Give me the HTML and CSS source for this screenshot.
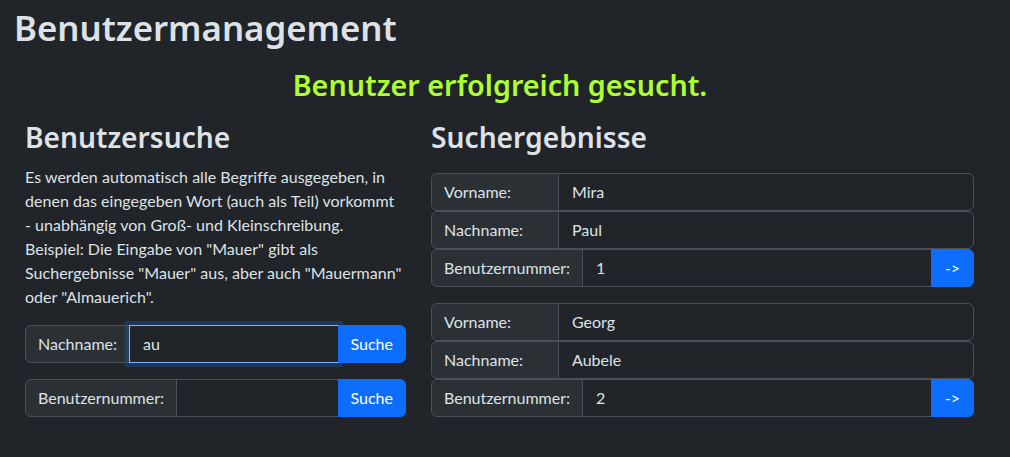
FILE: index.html
```html
<!DOCTYPE html>
<html lang="de">
<head>
<meta charset="utf-8">
<title>Benutzermanagement</title>
<link rel="stylesheet" href="styles.css">
</head>
<body>
<h1 class="title">Benutzermanagement</h1>
<h3 class="status">Benutzer erfolgreich gesucht.</h3>
<div class="layout">
  <section class="search">
    <h2 class="heading">Benutzersuche</h2>
    <p class="hint">Es werden automatisch alle Begriffe ausgegeben, in denen das eingegeben Wort (auch als Teil) vorkommt<br>- unabhängig von Groß- und Kleinschreibung. Beispiel: Die Eingabe von "Mauer" gibt als Suchergebnisse "Mauer" aus, aber auch "Mauermann" oder "Almauerich".</p>
    <div class="group spaced">
      <span class="label">Nachname:</span>
      <span class="field focused">au</span>
      <span class="btn">Suche</span>
    </div>
    <div class="group">
      <span class="label">Benutzernummer:</span>
      <span class="field"></span>
      <span class="btn">Suche</span>
    </div>
  </section>
  <section class="results">
    <h2 class="heading results-heading">Suchergebnisse</h2>
    <div class="record">
      <div class="group">
        <span class="label fixed">Vorname:</span>
        <span class="field last">Mira</span>
      </div>
      <div class="group">
        <span class="label fixed">Nachname:</span>
        <span class="field last">Paul</span>
      </div>
      <div class="group">
        <span class="label">Benutzernummer:</span>
        <span class="field">1</span>
        <span class="btn arrow">-&gt;</span>
      </div>
    </div>
    <div class="record">
      <div class="group">
        <span class="label fixed">Vorname:</span>
        <span class="field last">Georg</span>
      </div>
      <div class="group">
        <span class="label fixed">Nachname:</span>
        <span class="field last">Aubele</span>
      </div>
      <div class="group">
        <span class="label">Benutzernummer:</span>
        <span class="field">2</span>
        <span class="btn arrow">-&gt;</span>
      </div>
    </div>
  </section>
</div>
</body>
</html>
```
FILE: styles.css
```css
* { box-sizing: border-box; }

body {
  margin: 0;
  background: #212529;
  color: #dee2e6;
  font-family: Lato, "Noto Sans", sans-serif;
  font-size: 16px;
  line-height: 1.5;
}

.title,
.status,
.heading {
  font-family: "Noto Sans", "Open Sans", sans-serif;
  font-weight: 600;
  line-height: 1.2;
}

.title {
  margin: 7px 0 0;
  padding: 0 14px;
  font-size: 34.8px;
}

.status {
  margin: 19px 0 0;
  padding-right: 10px;
  text-align: center;
  color: #adff2f;
  font-size: 28.7px;
}

.layout {
  display: grid;
  grid-template-columns: 381px 543px;
  column-gap: 25px;
  padding-left: 25px;
  margin-top: 19px;
  align-items: start;
}

.heading {
  margin: 0 0 10px;
  font-size: 28.2px;
}

.results-heading {
  margin-bottom: 18px;
}

.hint {
  margin: 0 0 16px;
  letter-spacing: 0.03px;
}

.group {
  display: flex;
  height: 38px;
}

.spaced,
.record {
  margin-bottom: 16px;
}

.label {
  display: flex;
  align-items: center;
  padding: 0 12px;
  background: #2b3035;
  border: 1px solid #495057;
  border-radius: 6px 0 0 6px;
  white-space: nowrap;
}

.label.fixed {
  width: 128px;
}

.field {
  flex: 1;
  display: flex;
  align-items: center;
  padding: 0 12px 0 13px;
  margin-left: -1px;
  background: #212529;
  border: 1px solid #495057;
}

.field.last {
  border-radius: 0 6px 6px 0;
}

.field.focused {
  position: relative;
  border-color: #86b7fe;
  box-shadow: 0 0 0 4px rgba(13, 110, 253, 0.25);
}

.btn {
  display: flex;
  align-items: center;
  justify-content: center;
  padding: 0 12px;
  background: #0d6efd;
  border: 1px solid #0d6efd;
  color: #fff;
  border-radius: 0 6px 6px 0;
  margin-left: -1px;
  position: relative;
}

.arrow {
  width: 43px;
}
```
